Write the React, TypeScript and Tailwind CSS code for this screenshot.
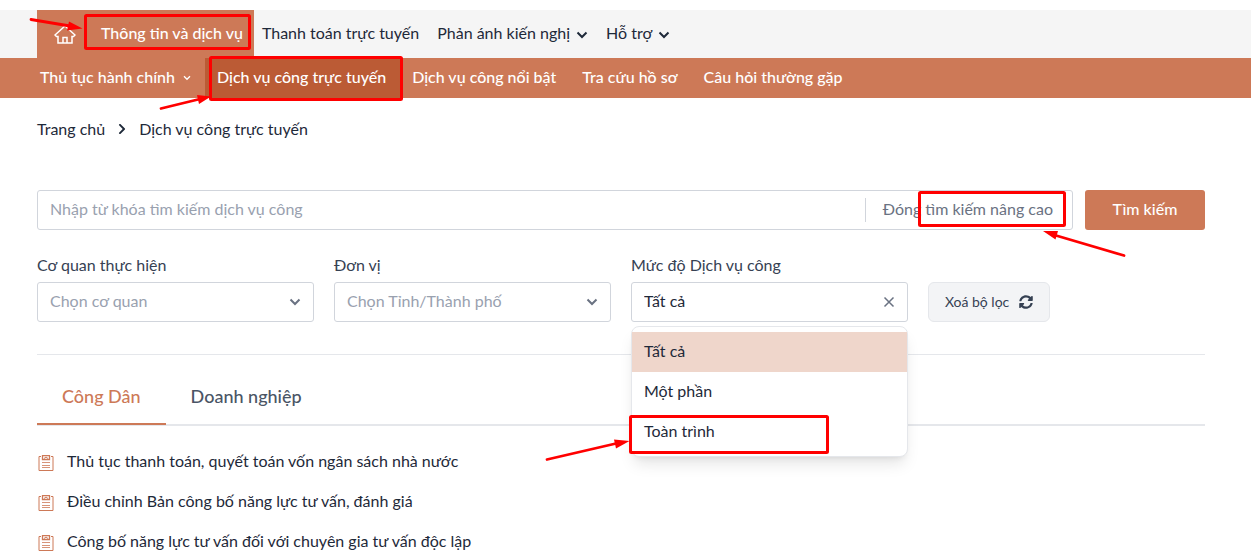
import type { ReactNode } from 'react'
import { FaChevronRight, FaSyncAlt } from 'react-icons/fa'

const TOP_LINKS = [
  { label: 'Thanh toán trực tuyến', menu: false },
  { label: 'Phản ánh kiến nghị', menu: true },
  { label: 'Hỗ trợ', menu: true },
]

const SUB_LINKS = [
  { label: 'Thủ tục hành chính', menu: true, active: false },
  { label: 'Dịch vụ công trực tuyến', menu: false, active: true },
  { label: 'Dịch vụ công nổi bật', menu: false, active: false },
  { label: 'Tra cứu hồ sơ', menu: false, active: false },
  { label: 'Câu hỏi thường gặp', menu: false, active: false },
]

const LEVELS = ['Tất cả', 'Một phần', 'Toàn trình']

const SERVICES = [
  'Thủ tục thanh toán, quyết toán vốn ngân sách nhà nước',
  'Điều chỉnh Bản công bố năng lực tư vấn, đánh giá',
  'Công bố năng lực tư vấn đối với chuyên gia tư vấn độc lập',
]

function Chevron({ className }: { className: string }) {
  return (
    <svg viewBox="0 0 12 8" fill="none" stroke="currentColor" strokeWidth="2" className={className} aria-hidden="true">
      <path d="M1.500 1.500 6 6l4.500-4.500" />
    </svg>
  )
}

function HomeIcon() {
  return (
    <svg viewBox="0 0 22 19" fill="none" stroke="currentColor" strokeWidth="1.500" className="h-[19px] w-[22px]" aria-hidden="true">
      <path d="M1 10 11 1l10 9-1.500 1.500H18V18H4v-6.500H2.500z" />
      <path d="M9 18v-5.500h4V18" />
    </svg>
  )
}

function ServiceIcon() {
  return (
    <svg viewBox="0 0 16 16" fill="none" stroke="currentColor" className="mt-0.5 h-4 w-4 shrink-0 text-[#cd7957]" aria-hidden="true">
      <path d="M3 1.500H1v14h14v-14h-2" />
      <path d="M4.500.5h7v4h-7z" strokeWidth="1.300" />
      <path d="M6 3.500 8 2l2 1.500" />
      <path d="M4 7.500h8M4 10.500h8M4 12.500h8" strokeOpacity=".8" />
    </svg>
  )
}

function Field({ id, label, children }: { id: string; label: string; children: ReactNode }) {
  return (
    <div>
      <label htmlFor={id} className="block pb-[5px] leading-6 text-gray-700">
        {label}
      </label>
      <div className="relative">{children}</div>
    </div>
  )
}

// Red boxes and arrows that point out the steps to follow
function Annotations() {
  return (
    <svg width="1251" height="556" className="pointer-events-none absolute left-0 top-0 z-20" fill="none" stroke="#ff0000" strokeWidth="3" aria-hidden="true">
      <rect x="85.500" y="15.500" width="164" height="33" rx="1" />
      <rect x="210.500" y="57.500" width="191" height="42" rx="1" />
      <rect x="919.500" y="192.500" width="145" height="33" rx="1" />
      <rect x="630.500" y="416.500" width="197" height="36" rx="1" />
      <g strokeWidth="2.800" strokeLinecap="round">
        <path d="M31 19.500 70 26" />
        <path d="M161 108.500 200 99" />
        <path d="M1124 255.500 1056 235.500" />
        <path d="M547 459.500 616 443.500" />
      </g>
      <g fill="#ff0000" stroke="none">
        <path d="M82.500 28.500 67 30.500l2-9z" />
        <path d="M211 96.500 199 104l-2-9z" />
        <path d="M1043 231 1058 231l-2.500 8.500z" />
        <path d="M629.500 441 616 448.500l-2-9z" />
      </g>
    </svg>
  )
}

export default function App() {
  return (
    <div className="relative overflow-x-clip bg-white pt-2.5 font-['Lato','Noto_Sans',sans-serif] text-base text-gray-800">
      <header>
        <nav className="bg-[#f5f5f5] pl-[37px]">
          <div className="flex h-12 items-center">
            <div className="flex h-full items-center bg-[#cd7957] font-medium text-white">
              <a href="#" aria-label="Trang chủ" className="px-[17px]">
                <HomeIcon />
              </a>
              <a href="#" className="pb-0.5 pl-2 pr-[11px]">
                Thông tin và dịch vụ
              </a>
            </div>
            {TOP_LINKS.map((link) => (
              <a key={link.label} href="#" className="flex items-center gap-1.5 pb-0.5 pl-2 pr-2.5">
                {link.label}
                {link.menu && <Chevron className="mt-1 h-2 w-3" />}
              </a>
            ))}
          </div>
        </nav>
        <nav className="bg-[#cd7957] pl-7 font-medium text-white">
          <div className="flex h-10">
            {SUB_LINKS.map((link) => (
              <a
                key={link.label}
                href="#"
                className={
                  link.active
                    ? 'flex items-center bg-[#bb5b35] pb-0.5 pl-3 pr-3.5'
                    : 'flex items-center gap-2 pb-0.5 pl-3 pr-3.5'
                }
              >
                {link.label}
                {link.menu && <Chevron className="mt-0.5 h-2 w-2" />}
              </a>
            ))}
          </div>
        </nav>
      </header>

      <main className="pl-[37px] pr-[46px]">
        <div className="flex items-center gap-3 pt-[19px] leading-6">
          <a href="#">Trang chủ</a>
          <FaChevronRight className="h-3 w-2.5" />
          <span>Dịch vụ công trực tuyến</span>
        </div>

        <form className="pt-[49px]">
          <div className="flex gap-3">
            <div className="flex h-10 flex-1 items-center rounded-[3px] border border-gray-300">
              <input
                type="text"
                aria-label="Từ khóa"
                placeholder="Nhập từ khóa tìm kiếm dịch vụ công"
                className="h-full min-w-0 flex-1 px-3 pb-[3px] outline-none placeholder:text-gray-400"
              />
              <button type="button" className="h-6 border-l border-gray-300 pl-[17px] pr-[19px] pb-0.5 leading-none text-gray-500">
                Đóng tìm kiếm nâng cao
              </button>
            </div>
            <button type="button" className="h-10 w-[120px] rounded-[3px] bg-[#cd7957] pb-0.5 font-medium text-white">
              Tìm kiếm
            </button>
          </div>

          <div className="grid grid-cols-4 items-end gap-5 pt-[23px]">
            <Field id="agency" label="Cơ quan thực hiện">
              <select id="agency" className="h-10 w-full appearance-none rounded-[3px] border border-gray-300 bg-white px-3 pb-0.5 text-gray-400">
                <option>Chọn cơ quan</option>
              </select>
              <Chevron className="pointer-events-none absolute right-[13px] top-4 h-2 w-3 text-gray-500" />
            </Field>
            <Field id="unit" label="Đơn vị">
              <select id="unit" className="h-10 w-full appearance-none rounded-[3px] border border-gray-300 bg-white px-3 pb-0.5 text-gray-400">
                <option>Chọn Tỉnh/Thành phố</option>
              </select>
              <Chevron className="pointer-events-none absolute right-[13px] top-4 h-2 w-3 text-gray-500" />
            </Field>
            <Field id="level" label="Mức độ Dịch vụ công">
              <select id="level" className="h-10 w-full appearance-none rounded-[3px] border border-gray-300 bg-white px-3 pb-0.5">
                {LEVELS.map((level) => (
                  <option key={level}>{level}</option>
                ))}
              </select>
              <button type="button" aria-label="Xoá" className="absolute right-[13px] top-3.5 text-gray-500">
                <svg viewBox="0 0 12 12" fill="none" stroke="currentColor" strokeWidth="1.500" className="h-3 w-3" aria-hidden="true">
                  <path d="m1.500 1.500 9 9m0-9-9 9" />
                </svg>
              </button>
              <ul className="absolute inset-x-0 top-11 z-10 rounded-lg border border-gray-200 bg-white pb-1 pt-[5px] shadow-lg">
                {LEVELS.map((level, i) => (
                  <li key={level}>
                    <button
                      type="button"
                      className={i === 0 ? 'h-10 w-full bg-[#efd6cb] px-3 pb-0.5 text-left' : 'h-10 w-full px-3 pb-0.5 text-left'}
                    >
                      {level}
                    </button>
                  </li>
                ))}
              </ul>
            </Field>
            <div>
              <button
                type="button"
                className="flex h-10 items-center gap-2.5 rounded-md border border-gray-200 bg-gray-100 px-4 text-sm text-gray-700"
              >
                Xoá bộ lọc
                <FaSyncAlt className="h-3.5 w-3.5" />
              </button>
            </div>
          </div>
        </form>

        <div className="mt-8 border-t border-gray-200 pt-[15px]">
          <div className="flex border-b-2 border-gray-200 text-lg font-medium">
            <button type="button" className="-mb-px h-[55px] border-b-2 border-[#cd7957] px-[25px] pb-0.5 text-[#cd7957]">
              Công Dân
            </button>
            <button type="button" className="h-[54px] px-[25px] pb-0.5 text-gray-600">
              Doanh nghiệp
            </button>
          </div>
        </div>

        <ul className="pt-4">
          {SERVICES.map((service) => (
            <li key={service}>
              <a href="#" className="flex h-10 items-center gap-[13px] pl-px">
                <ServiceIcon />
                <span className="pb-0.5">{service}</span>
              </a>
            </li>
          ))}
        </ul>
      </main>

      <Annotations />
    </div>
  )
}
